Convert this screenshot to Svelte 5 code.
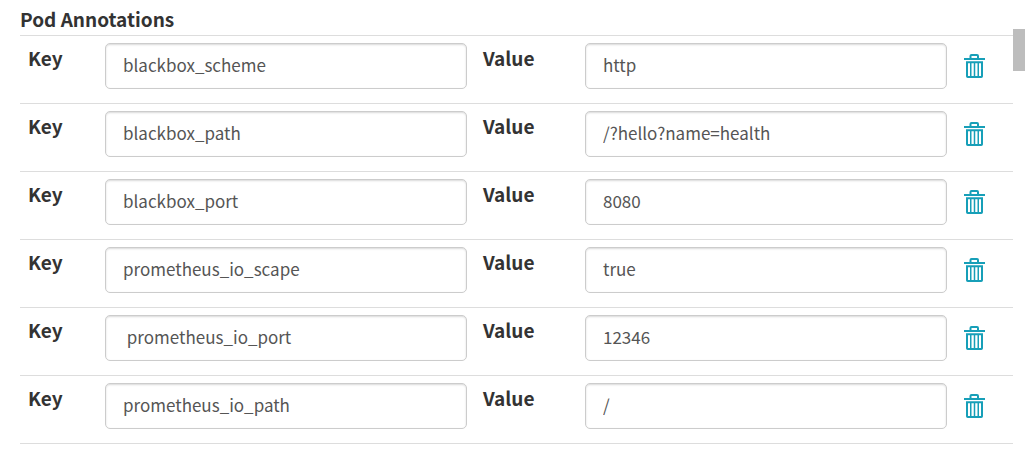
<script lang="ts">
  interface Annotation {
    key: string;
    value: string;
  }

  let annotations: Annotation[] = $state([
    { key: 'blackbox_scheme', value: 'http' },
    { key: 'blackbox_path', value: '/?hello?name=health' },
    { key: 'blackbox_port', value: '8080' },
    { key: 'prometheus_io_scape', value: 'true' },
    { key: ' prometheus_io_port', value: '12346' },
    { key: 'prometheus_io_path', value: '/' }
  ]);

  function remove(index: number) {
    annotations.splice(index, 1);
  }
</script>

<section class="annotations">
  <div class="content">
    <h2>Pod Annotations</h2>
    <ul class="rows">
      {#each annotations as annotation, i}
        <li class="row">
          <label for="key-{i}">Key</label>
          <input id="key-{i}" type="text" spellcheck="false" bind:value={annotation.key} />
          <label class="value-label" for="value-{i}">Value</label>
          <input id="value-{i}" type="text" spellcheck="false" bind:value={annotation.value} />
          <button type="button" aria-label="Delete annotation" onclick={() => remove(i)}>
            <svg viewBox="0 0 21 24" width="21" height="24" aria-hidden="true">
              <path d="M0 5h21M6.5 4.5V2Q6.5 1 7.5 1h5.5Q14 1 14 2v2.5" />
              <path d="M3 8.25h15v14q0 .75-.75.75H3.75Q3 23 3 22.25z" />
              <path class="slats" d="M6.75 8v15M10.5 8v15M14.25 8v15" />
            </svg>
          </button>
        </li>
      {/each}
    </ul>
  </div>
  <div class="scrollbar"><div class="thumb"></div></div>
</section>

<style>
  :global(body) {
    background: #fff;
    color: #333;
    font-family: 'Noto Sans CJK SC', sans-serif;
  }
  .annotations {
    display: flex;
    padding: 5px 3px 0 20px;
  }
  .content {
    flex: 1;
    min-width: 0;
  }
  h2 {
    margin: 0;
    padding-bottom: 2px;
    font-size: 19px;
    line-height: 28px;
    font-weight: 700;
  }
  .rows {
    margin: 0;
    padding: 0;
    list-style: none;
    border-top: 1px solid #ddd;
  }
  .row {
    display: grid;
    grid-template-columns: 77px 1fr 118px 1fr 55px;
    padding: 7px 11px 14px 8px;
    border-bottom: 1px solid #ddd;
  }
  label {
    font-size: 19px;
    line-height: 30px;
    font-weight: 700;
  }
  .value-label {
    padding-left: 16px;
  }
  input {
    box-sizing: border-box;
    width: 100%;
    min-width: 0;
    height: 46px;
    padding: 0 17px 4px;
    border: 1px solid #ccc;
    border-radius: 5px;
    background: #fff;
    box-shadow: inset 0 1px 2px rgba(0, 0, 0, 0.15);
    color: #555;
    font: 17px 'Noto Sans CJK SC', sans-serif;
  }
  button {
    display: flex;
    align-items: center;
    justify-content: center;
    padding: 0;
    border: 0;
    background: none;
    cursor: pointer;
  }
  path {
    fill: none;
    stroke: #179fb8;
    stroke-width: 2;
  }
  .slats {
    stroke-width: 1.5;
  }
  .scrollbar {
    width: 12px;
    padding-top: 24px;
  }
  .thumb {
    height: 42px;
    background: #bdbdbd;
  }
</style>
